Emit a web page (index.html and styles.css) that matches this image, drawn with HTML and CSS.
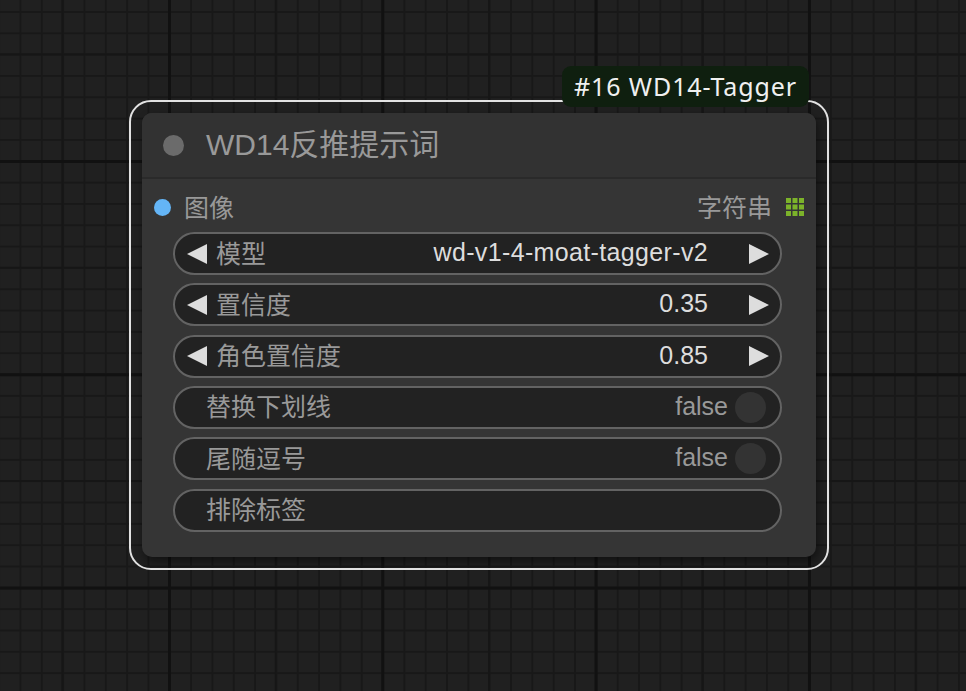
FILE: index.html
```html
<!DOCTYPE html>
<html>
<head>
  <title>WD14 Tagger node</title>
  <meta charset="UTF-8">
  <link rel="stylesheet" href="styles.css">
</head>
<body>
  <div class="canvas">
    <div class="node">
      <div class="node-badge">#16 WD14-Tagger</div>

      <div class="node-title">
        <span class="title-dot"></span>
        <span class="title-text">WD14反推提示词</span>
      </div>

      <div class="slots">
        <div class="slot">
          <span class="slot-dot"></span>
          <span class="label">图像</span>
        </div>
        <div class="slot">
          <span class="label">字符串</span>
          <svg class="list-icon" width="18" height="18" viewBox="0 0 18 18">
            <rect x="0" y="0" width="5" height="5"/>
            <rect x="6.5" y="0" width="5" height="5"/>
            <rect x="13" y="0" width="5" height="5"/>
            <rect x="0" y="6.5" width="5" height="5"/>
            <rect x="6.5" y="6.5" width="5" height="5"/>
            <rect x="13" y="6.5" width="5" height="5"/>
            <rect x="0" y="13" width="5" height="5"/>
            <rect x="6.5" y="13" width="5" height="5"/>
            <rect x="13" y="13" width="5" height="5"/>
          </svg>
        </div>
      </div>

      <div class="widgets">
        <div class="widget stepper">
          <svg class="arrow" width="20" height="20" viewBox="0 0 20 20"><polygon points="20,0 20,20 0,10"/></svg>
          <span class="label">模型</span>
          <span class="value wide">wd-v1-4-moat-tagger-v2</span>
          <svg class="arrow right" width="20" height="20" viewBox="0 0 20 20"><polygon points="0,0 0,20 20,10"/></svg>
        </div>
        <div class="widget stepper">
          <svg class="arrow" width="20" height="20" viewBox="0 0 20 20"><polygon points="20,0 20,20 0,10"/></svg>
          <span class="label">置信度</span>
          <span class="value">0.35</span>
          <svg class="arrow right" width="20" height="20" viewBox="0 0 20 20"><polygon points="0,0 0,20 20,10"/></svg>
        </div>
        <div class="widget stepper">
          <svg class="arrow" width="20" height="20" viewBox="0 0 20 20"><polygon points="20,0 20,20 0,10"/></svg>
          <span class="label">角色置信度</span>
          <span class="value">0.85</span>
          <svg class="arrow right" width="20" height="20" viewBox="0 0 20 20"><polygon points="0,0 0,20 20,10"/></svg>
        </div>
        <div class="widget toggle">
          <span class="label">替换下划线</span>
          <span class="state">false</span>
          <span class="knob"></span>
        </div>
        <div class="widget toggle">
          <span class="label">尾随逗号</span>
          <span class="state">false</span>
          <span class="knob"></span>
        </div>
        <div class="widget text">
          <span class="label">排除标签</span>
        </div>
      </div>
    </div>
  </div>
</body>
</html>
```

FILE: styles.css
```css
html, body {
  margin: 0;
  height: 100%;
}

body {
  font-family: "Liberation Sans", "Noto Sans CJK SC", sans-serif;
  background-color: #202020;
  background-image:
    linear-gradient(90deg, #111 3px, transparent 3px),
    linear-gradient(#111 3px, transparent 3px),
    linear-gradient(90deg, #161616 2px, transparent 2px),
    linear-gradient(#161616 2px, transparent 2px),
    linear-gradient(90deg, #181818 2px, transparent 2px),
    linear-gradient(#181818 2px, transparent 2px);
  background-size:
    213.33px 100%,
    100% 213.33px,
    106.67px 100%,
    100% 106.67px,
    21.333px 100%,
    100% 21.333px;
  background-position:
    168px 0,
    0 160px,
    168px 0,
    0 160px,
    19.5px 0,
    0 11px;
  overflow: hidden;
}

.canvas {
  position: relative;
  width: 966px;
  height: 691px;
}

/* node sits on the free canvas */
.node {
  position: absolute;
  left: 142px;
  top: 113px;
  width: 674px;
  height: 444px;
  background-color: #353535;
  border-radius: 10px;
  box-shadow: 2px 4px 8px rgba(0,0,0,0.45);
}

.node::before {
  content: "";
  position: absolute;
  top: -13px;
  left: -13px;
  right: -13px;
  bottom: -13px;
  border: 2px solid #e2e2e2;
  border-radius: 22px;
  pointer-events: none;
}

.node-badge {
  position: absolute;
  right: 7px;
  top: -47px;
  height: 41px;
  line-height: 41px;
  padding: 0 12px;
  background-color: #0f1f0f;
  border-radius: 9px;
  color: #f0f0f0;
  font-family: "Noto Sans", sans-serif;
  font-size: 25px;
  letter-spacing: 0.9px;
  z-index: 2;
}

.node-title {
  display: flex;
  align-items: center;
  height: 64px;
  padding-left: 21px;
  background-color: #323232;
  border-bottom: 2px solid #2a2a2a;
  border-radius: 10px 10px 0 0;
}

.title-dot {
  width: 21px;
  height: 21px;
  border-radius: 50%;
  background-color: #6b6b6b;
}

.title-text {
  margin-left: 22px;
  margin-bottom: 6px;
  font-size: 30px;
  color: #999;
}

.slots {
  display: flex;
  justify-content: space-between;
  align-items: center;
  height: 40px;
  margin-top: 8px;
  padding: 0 12px;
  font-size: 25px;
  color: #999;
}

.slot {
  display: flex;
  align-items: center;
}

.slot .label {
  margin-bottom: 3px;
}

.slot-dot {
  width: 17px;
  height: 17px;
  border-radius: 50%;
  background-color: #64b5f6;
  margin-right: 13px;
}

.list-icon {
  margin-left: 14px;
  fill: #7cb32a;
}

.widgets {
  display: flex;
  flex-direction: column;
  gap: 8.33px;
  margin: 5px 34px 0 31px;
}

.widget {
  display: flex;
  align-items: center;
  height: 43px;
  box-sizing: border-box;
  background-color: #222;
  border: 2px solid #636363;
  border-radius: 22px;
  font-size: 25px;
  color: #999;
}

.widget .label {
  margin-bottom: 4px;
}

.stepper {
  padding: 0 11px 0 12px;
}

.arrow {
  fill: #ddd;
  flex-shrink: 0;
}

.stepper .label {
  margin-left: 9px;
}

.value {
  margin-left: auto;
  margin-right: 41px;
  margin-bottom: 2px;
  color: #ddd;
}

.value.wide {
  letter-spacing: 0.35px;
}

.toggle, .text {
  padding: 0 14px 0 31px;
}

.state {
  margin-left: auto;
  margin-bottom: 2px;
}

.knob {
  width: 31px;
  height: 31px;
  margin-left: 7px;
  border-radius: 50%;
  background-color: #333;
}
```
